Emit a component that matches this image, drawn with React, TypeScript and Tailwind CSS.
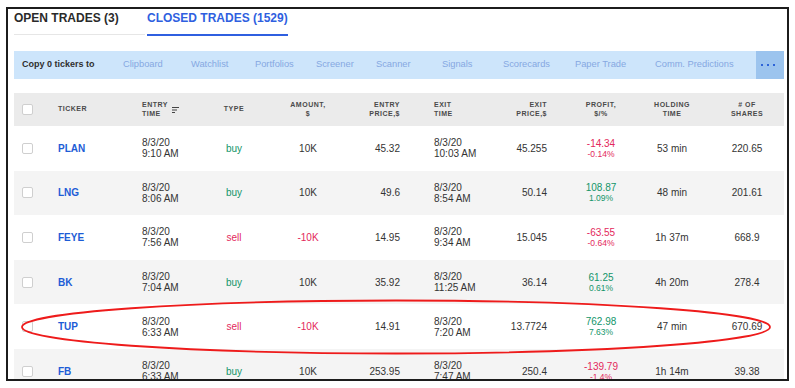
import React from "react";

type Row = {
  t: string; et: string; type: "buy" | "sell"; amt: string; ep: string;
  xt: string; xp: string; p1: string; p2: string; hold: string; sh: string;
};

const rows: Row[] = [
  { t: "PLAN", et: "9:10 AM", type: "buy", amt: "10K", ep: "45.32", xt: "10:03 AM", xp: "45.255", p1: "-14.34", p2: "-0.14%", hold: "53 min", sh: "220.65" },
  { t: "LNG", et: "8:06 AM", type: "buy", amt: "10K", ep: "49.6", xt: "8:54 AM", xp: "50.14", p1: "108.87", p2: "1.09%", hold: "48 min", sh: "201.61" },
  { t: "FEYE", et: "7:56 AM", type: "sell", amt: "-10K", ep: "14.95", xt: "9:34 AM", xp: "15.045", p1: "-63.55", p2: "-0.64%", hold: "1h 37m", sh: "668.9" },
  { t: "BK", et: "7:04 AM", type: "buy", amt: "10K", ep: "35.92", xt: "11:25 AM", xp: "36.14", p1: "61.25", p2: "0.61%", hold: "4h 20m", sh: "278.4" },
  { t: "TUP", et: "6:33 AM", type: "sell", amt: "-10K", ep: "14.91", xt: "7:20 AM", xp: "13.7724", p1: "762.98", p2: "7.63%", hold: "47 min", sh: "670.69" },
  { t: "FB", et: "6:33 AM", type: "buy", amt: "10K", ep: "253.95", xt: "7:47 AM", xp: "250.4", p1: "-139.79", p2: "-1.4%", hold: "1h 14m", sh: "39.38" },
];

const links: { label: string; w: string }[] = [
  { label: "Clipboard", w: "w-[68px]" },
  { label: "Watchlist", w: "w-[64px]" },
  { label: "Portfolios", w: "w-[61px]" },
  { label: "Screener", w: "w-[60px]" },
  { label: "Scanner", w: "w-[66px]" },
  { label: "Signals", w: "w-[61px]" },
  { label: "Scorecards", w: "w-[72px]" },
  { label: "Paper Trade", w: "w-[80px]" },
  { label: "Comm. Predictions", w: "w-[101px]" },
];

const RED = "text-[#e3285c]";
const GREEN = "text-[#13956a]";

function Checkbox() {
  return <div className="w-[11px] h-[11px] border border-[#cfcfcf] rounded-[2px] bg-white" />;
}

function SortIcon() {
  return (
    <svg width="7" height="6" viewBox="0 0 7 6" className="ml-[4px]">
      <rect x="0" y="0" width="7" height="1" fill="#444" />
      <rect x="0" y="2.5" width="5" height="1" fill="#444" />
      <rect x="0" y="5" width="3" height="1" fill="#444" />
    </svg>
  );
}

export default function App() {
  return (
    <div
      className="relative w-[795px] h-[388px] bg-white overflow-hidden"
      style={{ fontFamily: '"Liberation Sans", Arial, sans-serif' }}
    >
      <div className="ml-[6px] mt-[7px] w-[783px] h-[374px] border-2 border-[#1c1c1c] pl-[6px] pr-[3px] pt-[2px] overflow-hidden">
        {/* Tabs */}
        <div className="flex items-start">
          <div className="w-[131px] pb-[9px] border-b border-[#e6e6e6] text-[12px] leading-[14px] font-bold text-[#2a2a2a] whitespace-nowrap">
            OPEN TRADES (3)
          </div>
          <div className="ml-[2px] pb-[9px] border-b-2 border-[#2f5fe0] text-[12px] leading-[14px] font-bold text-[#2f5fe0] whitespace-nowrap">
            CLOSED TRADES (1529)
          </div>
        </div>

        {/* Copy bar */}
        <div className="mt-[15px] h-[28px] bg-[#cde5fb] flex items-center">
          <div className="w-[109px] pl-[8px] text-[9px] font-bold text-[#2f2f2f] whitespace-nowrap">
            Copy 0 tickers to
          </div>
          {links.map((l) => (
            <div key={l.label} className={`${l.w} text-[9.3px] text-[#86a8e2] whitespace-nowrap`}>
              {l.label}
            </div>
          ))}
          <div className="w-[28px] h-full bg-[#9cc4ee] flex items-center justify-center gap-[4px] pr-[4px]">
            <div className="w-[2px] h-[2px] bg-[#2d63d8]" />
            <div className="w-[2px] h-[2px] bg-[#2d63d8]" />
            <div className="w-[2px] h-[2px] bg-[#2d63d8]" />
          </div>
        </div>

        {/* Header */}
        <div className="mt-[14px] h-[33px] bg-[#ebebeb] flex items-center text-[7px] leading-[8.5px] font-bold tracking-[0.5px] text-[#4a4a4a] uppercase">
          <div className="w-[36px] pl-[8px]"><Checkbox /></div>
          <div className="w-[92px] pl-[8px]">TICKER</div>
          <div className="w-[62px] flex items-center">
            <div>ENTRY<br />TIME</div>
            <SortIcon />
          </div>
          <div className="w-[60px] text-center">TYPE</div>
          <div className="w-[88px] text-center">AMOUNT,<br />$</div>
          <div className="w-[48px] text-right">ENTRY<br />PRICE,$</div>
          <div className="w-[97px] pl-[34px]">EXIT<br />TIME</div>
          <div className="w-[69px] text-right pr-[19px]">EXIT<br />PRICE,$</div>
          <div className="w-[70px] text-center">PROFIT,<br />$/%</div>
          <div className="w-[72px] text-center">HOLDING<br />TIME</div>
          <div className="w-[76px] text-center pl-[2px]"># OF<br />SHARES</div>
        </div>

        {/* Rows */}
        {rows.map((r, i) => {
          const pos = !r.p1.startsWith("-");
          return (
            <div
              key={r.t}
              className={`h-[44.6px] flex items-center text-[10px] text-[#333] ${i % 2 === 1 ? "bg-[#f4f4f4]" : "bg-white"}`}
            >
              <div className="w-[36px] pl-[8px]"><Checkbox /></div>
              <div className="w-[92px] pl-[8px] font-bold text-[#1d5cd6]">{r.t}</div>
              <div className="w-[62px] leading-[11px] whitespace-nowrap">8/3/20<br />{r.et}</div>
              <div className={`w-[60px] text-center ${r.type === "buy" ? GREEN : RED}`}>{r.type}</div>
              <div className={`w-[88px] text-center ${r.type === "sell" ? RED : ""}`}>{r.amt}</div>
              <div className="w-[48px] text-right">{r.ep}</div>
              <div className="w-[97px] pl-[34px] leading-[11px] whitespace-nowrap">8/3/20<br />{r.xt}</div>
              <div className="w-[69px] text-right pr-[19px]">{r.xp}</div>
              <div className={`w-[70px] text-center ${pos ? GREEN : RED}`}>
                <div className="leading-[11px]">{r.p1}</div>
                <div className="text-[8.5px] leading-[10px]">{r.p2}</div>
              </div>
              <div className="w-[72px] text-center whitespace-nowrap">{r.hold}</div>
              <div className="w-[76px] text-center pl-[2px]">{r.sh}</div>
            </div>
          );
        })}
      </div>

      {/* Red annotation ellipse */}
      <svg className="absolute left-0 top-0 pointer-events-none" width="795" height="388" viewBox="0 0 795 388">
        <ellipse cx="396" cy="327" rx="374" ry="26.5" fill="none" stroke="#ee1b1b" strokeWidth="1.8" />
      </svg>
    </div>
  );
}
